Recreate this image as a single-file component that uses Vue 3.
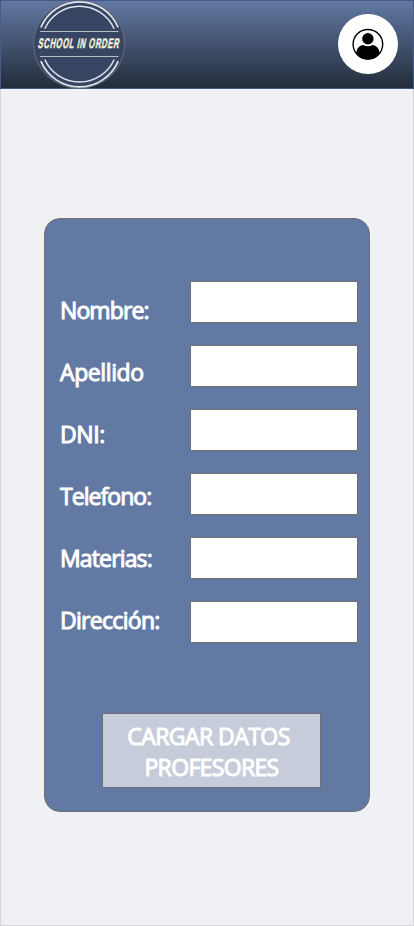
<script setup>
const labels = ['Nombre:', 'Apellido', 'DNI:', 'Telefono:', 'Materias:', 'Dirección:']
</script>

<template>
  <div class="screen">
    <header class="topbar">
      <svg class="logo" width="92" height="89" viewBox="33 0 92 89" aria-label="School in order">
        <ellipse cx="79" cy="44.5" rx="45.5" ry="43.7" fill="#374562" stroke="#6b6f75" stroke-width="1" />
        <g fill="none" stroke="#dfe4ee">
          <path d="M40.8 27.5A42 42 0 0 1 118.2 27.5M40.8 61.2A42 42 0 0 0 118.2 61.2" stroke-width="1.7" />
          <path d="M44.8 28.7A38 38 0 0 1 114.2 28.7M44.8 59.5A38 38 0 0 0 114.2 59.5" stroke-width="1.5" />
          <path d="M40 31.5H118.5M40 56.5H118.5" stroke="#b9bcc0" stroke-width="1" />
        </g>
        <text transform="translate(37.500 48) skewX(-11) scale(.545 1)" class="logo-text">SCHOOL IN ORDER</text>
      </svg>
      <button class="avatar" aria-label="Perfil">
        <svg width="32" height="32" viewBox="0 0 32 32">
          <circle cx="15.9" cy="16.3" r="14.8" fill="none" stroke="#000" stroke-width="1.4" />
          <circle cx="15.9" cy="10.7" r="5.7" />
          <path d="M4.3 25C4.500 20.500 7.500 17.300 11.300 17Q15.900 19.400 20.500 17C24.300 17.300 27.300 20.500 27.500 25Q22.900 31.500 15.900 31.500T4.300 25Z" />
        </svg>
      </button>
    </header>
    <main class="card">
      <div class="fields">
        <div class="labels">
          <label v-for="(label, i) in labels" :key="label" :for="'f' + i" :class="'label-' + i">{{ label }}</label>
        </div>
        <div class="inputs">
          <input v-for="(label, i) in labels" :id="'f' + i" :key="label" type="text" />
        </div>
      </div>
      <button class="submit">
        <span class="line-a">CARGAR DATOS</span>
        <span class="line-b">PROFESORES</span>
      </button>
    </main>
  </div>
</template>

<style>
body { margin: 0; }
</style>

<style scoped>
.screen {
  box-sizing: border-box;
  width: 414px;
  height: 926px;
  background: #f0f1f5;
  border: 1px solid #d5d6da;
  border-top: 0;
  font-family: "Open Sans", "Noto Sans", sans-serif;
}
.topbar {
  box-sizing: border-box;
  height: 89px;
  margin: 0 -1px;
  padding: 0 16px 0 33px;
  display: flex;
  justify-content: space-between;
  align-items: flex-start;
  background: linear-gradient(#6279a4, #222b39);
  box-shadow: inset 0 0 0 1px #465c86;
}
.logo { display: block; }
.logo-text {
  font: 700 14px "Liberation Sans", sans-serif;
  letter-spacing: 1.2px;
  fill: #f3f0dd;
  stroke: #f3f0dd;
  stroke-width: .5px;
}
.avatar {
  width: 60px;
  height: 60px;
  margin-top: 14px;
  padding: 0;
  border: 0;
  border-radius: 50%;
  background: #fff;
  display: grid;
  place-items: center;
}
.avatar svg { display: block; }
.card {
  box-sizing: border-box;
  width: 326px;
  height: 594px;
  margin: 129px 0 0 43px;
  padding: 62px 11px 0 15px;
  border: 1px solid #707070;
  border-radius: 16px;
  background: #6279a3;
}
.fields {
  display: flex;
  justify-content: space-between;
  align-items: flex-start;
  height: 362px;
}
.labels {
  display: flex;
  flex-direction: column;
  align-items: flex-start;
}
.labels label {
  height: 62px;
  line-height: 59px;
  font-size: 23px;
  color: #fff;
  white-space: nowrap;
  -webkit-text-stroke: 1px #fff;
}
.label-0 { letter-spacing: -0.9px; }
.label-1 { letter-spacing: -0.4px; }
.label-2 { letter-spacing: -0.4px; }
.labels .label-3 { letter-spacing: -0.95px; }
.labels .label-4 { letter-spacing: -0.85px; }
.labels .label-5 { letter-spacing: -0.7px; }
.inputs {
  display: flex;
  flex-direction: column;
  gap: 22px;
}
.inputs input {
  box-sizing: border-box;
  width: 168px;
  height: 42px;
  padding: 0 8px;
  border: 1px solid #707070;
  border-radius: 0;
  background: #fff;
  font-size: 20px;
}
.submit {
  box-sizing: border-box;
  display: flex;
  flex-direction: column;
  align-items: center;
  width: 219px;
  height: 75px;
  margin: 70px 0 0 42px;
  padding: 7px 0 0;
  border: 1px solid #707070;
  background: #c6ccd9;
  font: 23px/31px "Open Sans", "Noto Sans", sans-serif;
  color: #fff;
  -webkit-text-stroke: 1px #fff;
}
.line-a { margin-right: 6px; letter-spacing: -0.55px; }
.line-b { margin-left: 0; letter-spacing: -0.65px; }
</style>
